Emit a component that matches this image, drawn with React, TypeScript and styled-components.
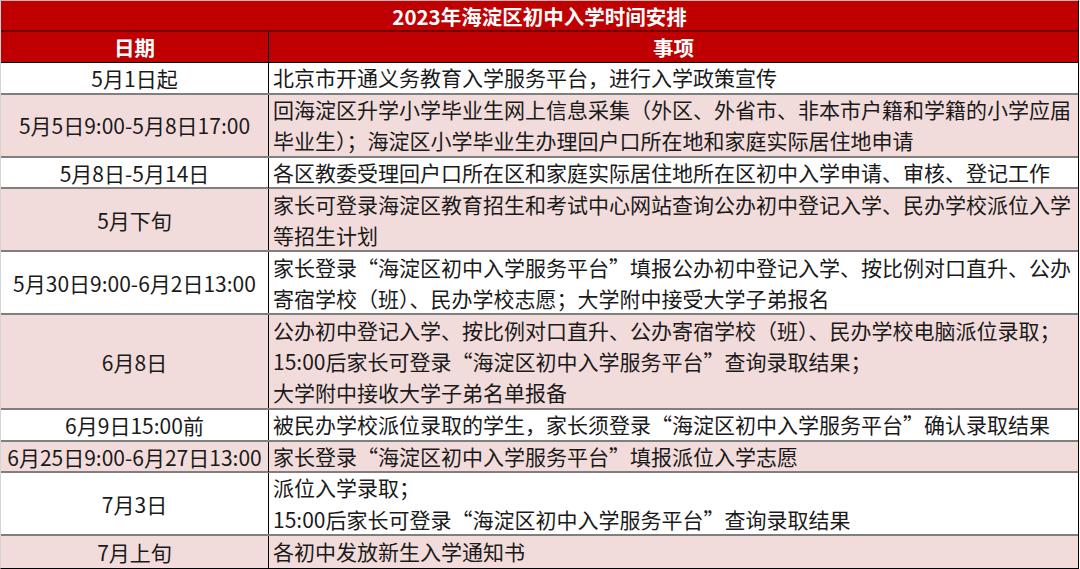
import styled, { createGlobalStyle } from 'styled-components'

const GlobalStyle = createGlobalStyle`
  html, body {
    margin: 0;
    padding: 0;
    background: #ffffff;
  }
  body {
    font-family: "Noto Sans CJK SC", "Noto Sans", sans-serif;
  }
`

type Row = {
  date: string
  lines: string[]
  shaded?: boolean
}

const rows: Row[] = [
  { date: '5月1日起', lines: ['北京市开通义务教育入学服务平台，进行入学政策宣传'] },
  {
    date: '5月5日9:00-5月8日17:00',
    shaded: true,
    lines: [
      '回海淀区升学小学毕业生网上信息采集（外区、外省市、非本市户籍和学籍的小学应届',
      '毕业生）；海淀区小学毕业生办理回户口所在地和家庭实际居住地申请',
    ],
  },
  { date: '5月8日-5月14日', lines: ['各区教委受理回户口所在区和家庭实际居住地所在区初中入学申请、审核、登记工作'] },
  {
    date: '5月下旬',
    shaded: true,
    lines: [
      '家长可登录海淀区教育招生和考试中心网站查询公办初中登记入学、民办学校派位入学',
      '等招生计划',
    ],
  },
  {
    date: '5月30日9:00-6月2日13:00',
    lines: [
      '家长登录“海淀区初中入学服务平台”填报公办初中登记入学、按比例对口直升、公办',
      '寄宿学校（班）、民办学校志愿；大学附中接受大学子弟报名',
    ],
  },
  {
    date: '6月8日',
    shaded: true,
    lines: [
      '公办初中登记入学、按比例对口直升、公办寄宿学校（班）、民办学校电脑派位录取；',
      '15:00后家长可登录“海淀区初中入学服务平台”查询录取结果；',
      '大学附中接收大学子弟名单报备',
    ],
  },
  { date: '6月9日15:00前', lines: ['被民办学校派位录取的学生，家长须登录“海淀区初中入学服务平台”确认录取结果'] },
  { date: '6月25日9:00-6月27日13:00', shaded: true, lines: ['家长登录“海淀区初中入学服务平台”填报派位入学志愿'] },
  {
    date: '7月3日',
    lines: ['派位入学录取；', '15:00后家长可登录“海淀区初中入学服务平台”查询录取结果'],
  },
  { date: '7月上旬', shaded: true, lines: ['各初中发放新生入学通知书'] },
]

const LINE = 31.55

export default function App() {
  return (
    <>
      <GlobalStyle />
      <Sheet>
        <TitleBar>2023年海淀区初中入学时间安排</TitleBar>
        <HeadRow>
          <HeadCell $date>日期</HeadCell>
          <HeadCell>事项</HeadCell>
        </HeadRow>
        {rows.map((row) => (
          <BodyRow key={row.date} $shaded={row.shaded} style={{ height: row.lines.length * LINE }}>
            <DateCell>{row.date}</DateCell>
            <ItemCell>
              {row.lines.map((line) => (
                <Line key={line}>{line}</Line>
              ))}
            </ItemCell>
          </BodyRow>
        ))}
      </Sheet>
    </>
  )
}

const Sheet = styled.div`
  width: 1079px;
  box-sizing: border-box;
  display: flex;
  flex-direction: column;
  border-top: 1px solid #b8b8b8;
  border-left: 1px solid #d4d4d4;
  border-right: 1px solid #000000;
  border-bottom: 1px solid #000000;
  font-size: 21px;
  color: #1a1a1a;
`

const TitleBar = styled.div`
  height: 31px;
  box-sizing: border-box;
  display: flex;
  align-items: center;
  justify-content: center;
  background: #c00000;
  color: #ffffff;
  font-weight: 700;
  font-size: 20.5px;
  border-bottom: 2px solid #700000;
  white-space: nowrap;
`

const HeadRow = styled.div`
  height: 31px;
  box-sizing: border-box;
  display: grid;
  grid-template-columns: 268px 1fr;
  background: #c00000;
  border-bottom: 1px solid #000000;
`

const HeadCell = styled.div<{ $date?: boolean }>`
  display: flex;
  align-items: center;
  justify-content: center;
  color: #ffffff;
  font-weight: 700;
  font-size: 20.5px;
  border-right: ${(p) => (p.$date ? '1px solid #000000' : 'none')};
  white-space: nowrap;
`

const BodyRow = styled.div<{ $shaded?: boolean }>`
  box-sizing: border-box;
  display: grid;
  grid-template-columns: 268px 1fr;
  background: ${(p) => (p.$shaded ? '#f2dcdb' : '#ffffff')};
  border-bottom: 2px solid #7f7f7f;
  &:last-child {
    border-bottom: none;
  }
`

const DateCell = styled.div`
  display: flex;
  align-items: center;
  justify-content: center;
  white-space: nowrap;
  border-right: 1px solid #000000;
`

const ItemCell = styled.div`
  display: flex;
  flex-direction: column;
  justify-content: center;
  padding-left: 4px;
  overflow: hidden;
`

const Line = styled.div`
  line-height: 31.2px;
  white-space: nowrap;
`
